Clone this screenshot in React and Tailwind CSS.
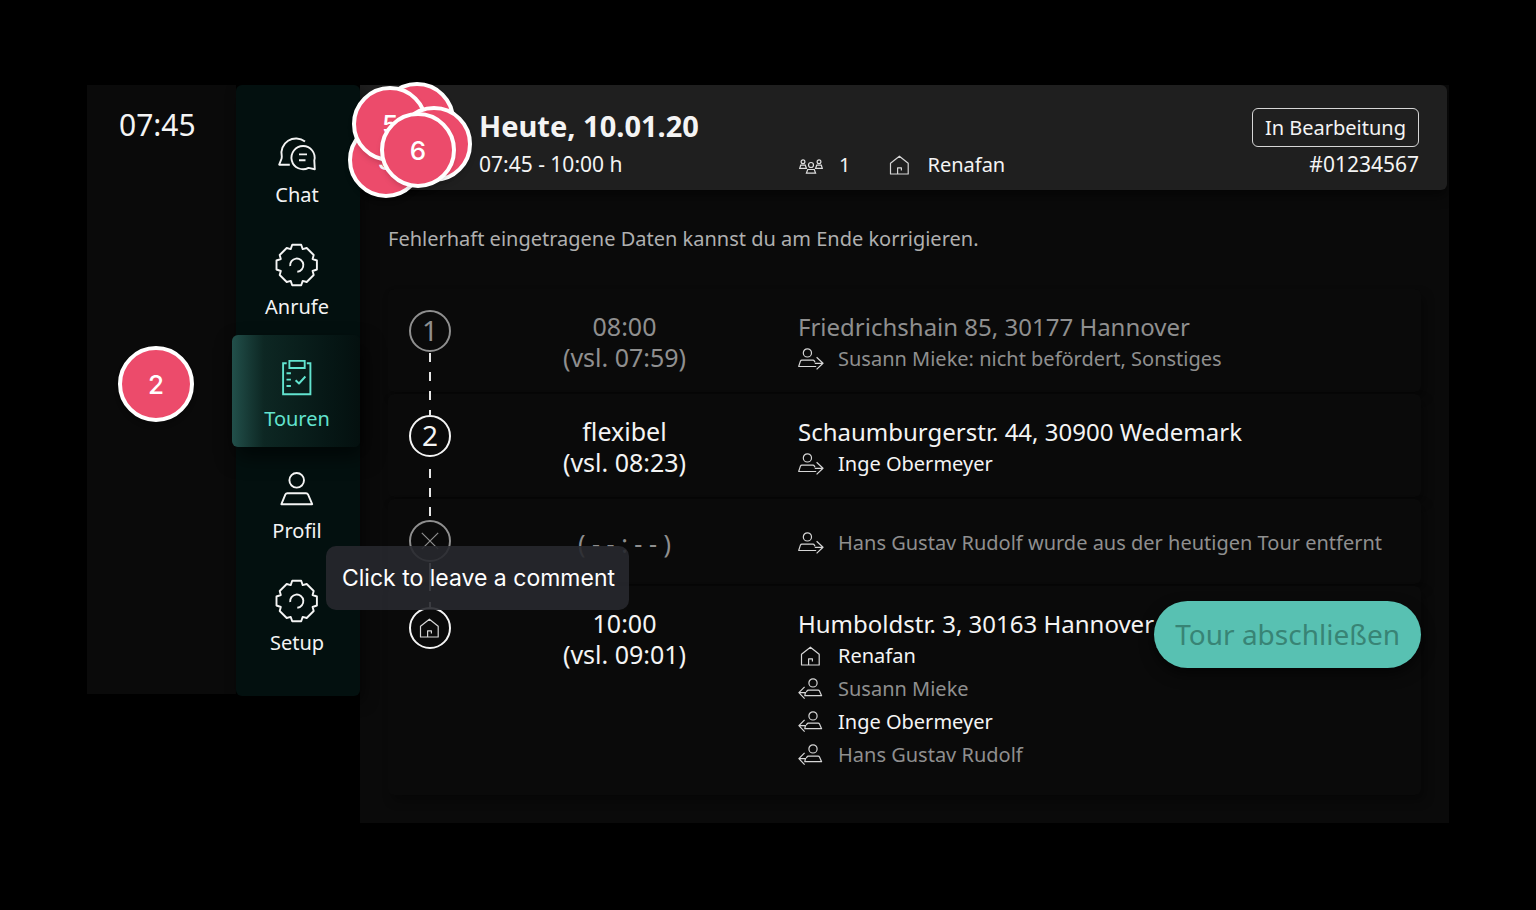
import React from 'react';

const GEAR =
  'M-4.5-20.2H4.5L6-15.9 10-17 17-10 15.9-6 20.2-4.5V4.5L15.9 6 17 10 10 17 6 15.9 4.5 20.2H-4.5L-6 15.9-10 17-17 10-15.9 6-20.2 4.5V-4.5L-15.9-6-17-10-10-17-6-15.9Z';

const NavSvg = ({ children }) => (
  <svg
    viewBox="0 0 42 42"
    className="size-[42px] overflow-visible"
    fill="none"
    stroke="currentColor"
    strokeWidth="1.9"
    strokeLinejoin="round"
    aria-hidden="true"
  >
    {children}
  </svg>
);

const ChatIcon = () => (
  <NavSvg>
    <path d="M29 8.6A14.6 14.6 0 0 0 5.8 23.5L5.6 25.5 3.2 31.7H13.8" />
    <path d="M38.3 27.5A11.6 11.6 0 1 0 32.5 34.9L38.8 36.2Z" />
    <path d="M23 21.4h8M23 27.3h6.5" />
  </NavSvg>
);

const GearIcon = () => (
  <NavSvg>
    <g transform="translate(20.7 20)">
      <path d={GEAR} />
      <path d="M-6.5 1A6.6 6.6 0 1 1 .6 6.7" />
    </g>
  </NavSvg>
);

const TourIcon = () => (
  <NavSvg>
    <path d="M10.7 6.2H7.1V37.3H34.4V6.2H30.8" strokeLinejoin="miter" />
    <path d="M13.4 3.9H28.7V11H13.4Z" strokeLinejoin="miter" />
    <path d="M10.5 16.3h4.4M10.5 22.6h4.4M10.5 29h4.4" />
    <path d="M19.6 23.3l3.4 3.2 6.4-7" />
  </NavSvg>
);

const ProfileIcon = () => (
  <NavSvg>
    <circle cx="20.7" cy="11.3" r="7.3" />
    <path d="M5.4 35.2 9.4 25.4Q10 24.2 11.3 24.2H30Q31.4 24.2 32 25.4L36.2 35.2Z" />
  </NavSvg>
);

const SmallSvg = ({ children }) => (
  <svg
    viewBox="0 0 26 22"
    className="h-[22px] w-[26px] shrink-0"
    fill="none"
    stroke="#d6d6d6"
    strokeWidth="1.2"
    strokeLinejoin="round"
    aria-hidden="true"
  >
    {children}
  </svg>
);

const PersonOut = () => (
  <SmallSvg>
    <circle cx="9.4" cy="4.9" r="4.1" />
    <path d="M17 14.2 16.3 12.9Q15.9 12.1 15 12.1H3.8Q2.9 12.1 2.5 12.9L.7 18.5H18.2M16.8 15.3H25M18.6 9.3 25 15.3 18.6 21.4" />
  </SmallSvg>
);

const PersonIn = () => (
  <SmallSvg>
    <circle cx="15" cy="4.9" r="4.1" />
    <path d="M8.3 14.2 9 12.9Q9.4 12.1 10.3 12.1H20.2Q21.1 12.1 21.5 12.9L23.6 17.7H6.8L7.4 14.7M8 14.7H.9M6.6 8.9.9 14.7 6.6 20.6" />
  </SmallSvg>
);

const HomeIcon = () => (
  <SmallSvg>
    <path d="M10.6 20V13.8H14.4V16.6M3.5 20V9.2L12.4 2.2 21.2 9.2V20Z" />
  </SmallSvg>
);

const GroupIcon = () => (
  <svg viewBox="0 0 24 15" className="mt-0.5 h-[15px] w-6 shrink-0" fill="none" stroke="#dedede" strokeWidth="1.2" aria-hidden="true">
    <circle cx="4" cy="2.8" r="1.9" />
    <circle cx="20" cy="2.8" r="1.9" />
    <circle cx="12" cy="6" r="2.5" />
    <path d="M.7 9.4 1.7 6.2H6.3L7.4 9.4ZM16.6 9.4 17.7 6.2H22.3L23.3 9.4ZM7.4 14.2 8.7 10.5H15.3L16.6 14.2Z" />
  </svg>
);

const NAV = [
  { label: 'Chat', icon: ChatIcon },
  { label: 'Anrufe', icon: GearIcon },
  { label: 'Touren', icon: TourIcon, active: true },
  { label: 'Profil', icon: ProfileIcon },
  { label: 'Setup', icon: GearIcon },
];

const STOPS = [
  {
    badge: '1',
    time: ['08:00', '(vsl. 07:59)'],
    address: 'Friedrichshain 85, 30177 Hannover',
    people: [{ icon: PersonOut, text: 'Susann Mieke: nicht befördert, Sonstiges', muted: true }],
    muted: true,
    dashes: '9 10',
    size: 'min-h-[103px]',
  },
  {
    badge: '2',
    time: ['flexibel', '(vsl. 08:23)'],
    address: 'Schaumburgerstr. 44, 30900 Wedemark',
    people: [{ icon: PersonOut, text: 'Inge Obermeyer' }],
    dashes: '0 11 9 10 9 10 9 10',
    size: 'min-h-[103px]',
  },
  {
    badge: 'x',
    time: ['( - - : - - )'],
    people: [{ icon: PersonOut, text: 'Hans Gustav Rudolf wurde aus der heutigen Tour entfernt', muted: true }],
    muted: true,
    dashes: '28 11 9 10',
    size: 'min-h-[85px]',
  },
  {
    badge: 'home',
    time: ['10:00', '(vsl. 09:01)'],
    address: 'Humboldstr. 3, 30163 Hannover',
    people: [
      { icon: HomeIcon, text: 'Renafan' },
      { icon: PersonIn, text: 'Susann Mieke', muted: true },
      { icon: PersonIn, text: 'Inge Obermeyer' },
      { icon: PersonIn, text: 'Hans Gustav Rudolf', muted: true },
    ],
    size: 'min-h-[209px]',
  },
];

const Badge = ({ kind }) => {
  if (kind === 'x') {
    return (
      <svg viewBox="0 0 18 18" className="size-[18px]" stroke="currentColor" strokeWidth="1.2" aria-hidden="true">
        <path d="M.8.8 17.2 17.2M17.2.8.8 17.2" />
      </svg>
    );
  }
  if (kind === 'home') return <HomeIcon />;
  return <span className="pb-0.5">{kind}</span>;
};

const Stop = ({ stop }) => {
  const tone = stop.muted ? 'text-[#8f8f8f]' : 'text-[#f4f4f4]';
  return (
    <li
      className={`${stop.size} grid grid-cols-[42px_347px_1fr] rounded-md bg-[#0a0a0a] px-[21px] pt-[21px] shadow-[4px_6px_10px_rgba(0,0,0,0.35)]`}
    >
      <div className="relative">
        <div className={`${tone} flex size-[42px] items-center justify-center rounded-full border-2 border-current text-[28px] leading-none`}>
          <Badge kind={stop.badge} />
        </div>
        {stop.dashes && (
          <svg className="absolute top-[43px] left-5 z-10 h-[62px] w-0.5" aria-hidden="true">
            <line
              x1="1"
              y1="0"
              x2="1"
              y2={stop.badge === 'x' ? 44 : 62}
              stroke="#e6e6e6"
              strokeWidth="2"
              strokeDasharray={stop.dashes}
            />
          </svg>
        )}
      </div>
      <div className={`${tone} text-center text-[25px] leading-[31px] ${stop.address ? 'pt-px' : 'pt-2'}`}>
        {stop.time.map((line) => (
          <p key={line}>{line}</p>
        ))}
      </div>
      <div className={stop.address ? 'pt-px' : 'pt-1.5'}>
        {stop.address && <p className={`${tone} text-[24px] leading-[31px] whitespace-nowrap`}>{stop.address}</p>}
        <ul>
          {stop.people.map(({ icon: Icon, text, muted }) => (
            <li
              key={text}
              className={`flex items-center gap-3.5 text-[20px] leading-[33px] ${muted ? 'text-[#8f8f8f]' : 'text-[#f4f4f4]'}`}
            >
              <Icon />
              <span>{text}</span>
            </li>
          ))}
        </ul>
      </div>
    </li>
  );
};

// Comment pins float freely over the prototype
const PINS = [
  { id: 'a', place: 'left-[379px] top-[82px]' },
  { id: 'b', place: 'left-[348px] top-[122px]', label: '3' },
  { id: 'c', place: 'left-[352px] top-[86px]', label: '5' },
  { id: 'd', place: 'left-[396px] top-[106px]' },
  { id: 'e', place: 'left-[380px] top-[112px]', label: '6' },
  { id: 'f', place: 'left-[118px] top-[346px]', label: '2' },
];

const App = () => {
  return (
    <div className="relative min-h-screen bg-black px-[87px] py-[85px] font-['Noto_Sans',sans-serif] text-[#f4f4f4]">
      <div className="flex items-start">
        <div className="relative z-10 flex shrink-0">
          <aside className="mb-0.5 w-[149px] bg-[#0a0a0a] pt-[23px] pl-8 text-[30px] leading-[34px]">
            <time>07:45</time>
          </aside>
          <nav className="w-[124px] rounded-md bg-[#03100f] pt-[26px] pb-[25px] shadow-[4px_6px_14px_rgba(0,0,0,0.5)]">
            {NAV.map(({ label, icon: Icon, active }) => (
              <a
                key={label}
                href="#"
                className={`flex h-28 flex-col items-center gap-1.5 pt-[22px] text-[20px] leading-7 ${
                  active
                    ? '-ml-1 rounded-md bg-linear-to-r from-[#22504b] via-[#0d2723] via-25% to-[#04100f] pl-0.5 text-[#62e3cf] shadow-[4px_10px_20px_rgba(0,0,0,0.6)]'
                    : 'pr-0.5'
                }`}
              >
                <Icon />
                {label}
              </a>
            ))}
          </nav>
        </div>

        <main className="relative min-w-0 flex-1 bg-[#0a0a0a] pb-7">
          <header className="mr-0.5 grid grid-cols-[320px_1fr_auto] grid-rows-[39px_36px] items-center rounded-r-md bg-[#1f1f1f] pt-[23px] pr-7 pb-[7px] pl-[119px] text-[20px] shadow-[0_6px_12px_rgba(0,0,0,0.5)]">
            <h1 className="col-span-2 pb-1 text-[29px] leading-9 font-bold">Heute, 10.01.20</h1>
            <span className="flex h-full items-center rounded-md border border-[#d6d6d6] px-3">In Bearbeitung</span>
            <p className="text-[21px]">07:45 - 10:00 h</p>
            <div className="flex items-center">
              <GroupIcon />
              <span className="ml-4">1</span>
              <span className="ml-[37px] flex items-center gap-3.5">
                <HomeIcon />
                Renafan
              </span>
            </div>
            <p className="text-right text-[21px]">#01234567</p>
          </header>

          <p className="pt-[34px] pl-7 text-[20px] leading-[30px] text-[#b0b0b0]">
            Fehlerhaft eingetragene Daten kannst du am Ende korrigieren.
          </p>

          <ol className="mx-7 mt-[35px] flex flex-col gap-0.5">
            {STOPS.map((stop) => (
              <Stop key={stop.badge} stop={stop} />
            ))}
          </ol>

          <button
            disabled
            className="absolute right-7 bottom-[155px] z-10 h-[67px] rounded-full bg-[#58c1b2] px-[21px] pb-0.5 text-[28px] text-[#388475] shadow-[0_6px_14px_rgba(0,0,0,0.6)]"
          >
            Tour abschließen
          </button>
        </main>
      </div>

      {PINS.map(({ id, place, label }) => (
        <div
          key={id}
          className={`${place} absolute z-20 flex size-[76px] items-center justify-center rounded-full border-4 border-white bg-[#ec4b6b] font-[Inter,sans-serif] text-[26px] font-medium text-white shadow-md`}
        >
          {label}
        </div>
      ))}

      <div
        role="tooltip"
        className="absolute top-[546px] left-[326px] z-30 rounded-[10px] bg-[#27282d]/90 py-4 pr-3.5 pl-4 font-[Inter,sans-serif] text-[23px] leading-8 whitespace-nowrap text-white"
      >
        Click to leave a comment
      </div>
    </div>
  );
};

export default App;
